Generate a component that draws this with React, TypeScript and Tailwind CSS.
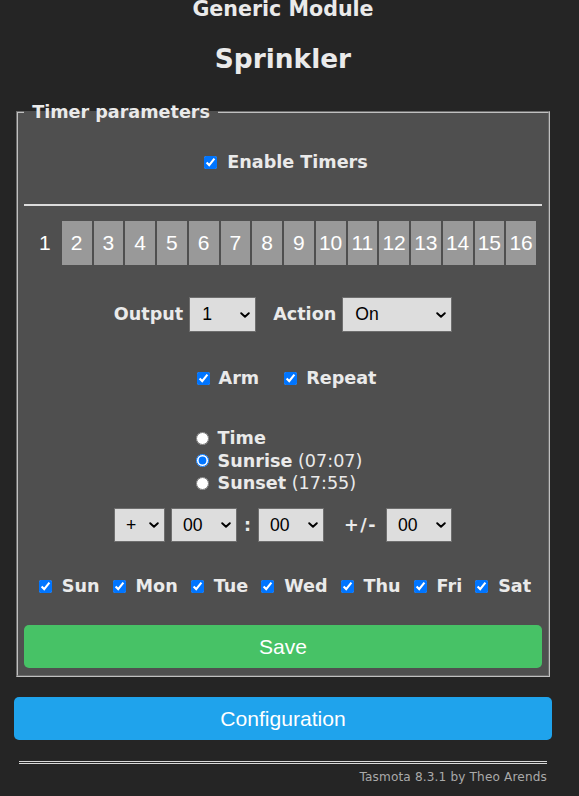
import React from "react";

function Chevron() {
  return (
    <svg
      width="10"
      height="6"
      viewBox="0 0 10 6"
      className="pointer-events-none absolute right-[6px] top-1/2 -translate-y-1/2"
    >
      <path
        d="M1.2 1.2L5 4.8L8.8 1.2"
        fill="none"
        stroke="#000"
        strokeWidth="1.9"
        strokeLinecap="round"
        strokeLinejoin="round"
      />
    </svg>
  );
}

function Sel({ box, pad, options, value }: { box: string; pad: string; options: string[]; value: string }) {
  return (
    <div className={"relative shrink-0 " + box}>
      <select
        defaultValue={value}
        className={
          "appearance-none w-full h-full bg-[#dddddd] border border-[#6e6e6e] text-black text-[17.6px] font-['Liberation_Sans',Arial,sans-serif] outline-none " +
          pad
        }
      >
        {options.map((o) => (
          <option key={o} value={o}>
            {o}
          </option>
        ))}
      </select>
      <Chevron />
    </div>
  );
}

function Cb() {
  return <input type="checkbox" defaultChecked className="w-[13px] h-[13px] m-0 shrink-0" />;
}

export default function App() {
  const tabs = Array.from({ length: 16 }, (_, i) => i + 1);
  const days = ["Sun", "Mon", "Tue", "Wed", "Thu", "Fri", "Sat"];
  const mins = Array.from({ length: 60 }, (_, i) => String(i).padStart(2, "0"));
  const hours = Array.from({ length: 24 }, (_, i) => String(i).padStart(2, "0"));
  return (
    <div className="min-h-screen overflow-hidden bg-[#252525] text-[#eaeaea] font-['DejaVu_Sans',Verdana,sans-serif] text-[17.6px]">
      <div className="ml-[14px] w-[538px] flex flex-col">
        <h3 className="mt-[-3px] text-center font-bold text-[20.6px] leading-[24px]">Generic Module</h3>
        <h2 className="mt-[22px] text-center font-bold text-[26.4px] leading-[31px]">Sprinkler</h2>

        <fieldset className="mt-[28px] mx-[2px] px-[6px] pb-[7px] bg-[#4f4f4f] border-2 [border-style:groove] border-[#c0c0c0]">
          <legend className="font-bold leading-[20.5px] px-[2px]">&nbsp;Timer parameters&nbsp;</legend>

          <div className="mt-[30px] h-[20px] flex items-center justify-center pl-[6px]">
            <Cb />
            <span className="ml-[10px] font-bold">Enable Timers</span>
          </div>

          <div className="mt-[31.5px] h-[2px] bg-[#dcdcdc]" />

          <div className="mt-[15px] mx-[6px] flex gap-[2px] h-[44px]">
            {tabs.map((t) => (
              <button
                key={t}
                className={
                  "flex-1 flex items-center justify-center text-white text-[21px] font-['Liberation_Sans',Arial,sans-serif] " +
                  (t === 1 ? "bg-transparent" : "bg-[#999999]")
                }
              >
                {t}
              </button>
            ))}
          </div>

          <div className="mt-[32px] h-[35px] flex items-center justify-center">
            <span className="font-bold">Output</span>
            <div className="w-[6px]" />
            <Sel box="w-[67px] h-[35px]" pad="pl-[12px]" options={["1", "2", "3", "4"]} value="1" />
            <div className="w-[17px]" />
            <span className="font-bold">Action</span>
            <div className="w-[6px]" />
            <Sel box="w-[110px] h-[35px]" pad="pl-[12px]" options={["Off", "On", "Toggle", "Rule"]} value="On" />
          </div>

          <div className="mt-[36px] h-[20px] flex items-center justify-center pl-[7px]">
            <Cb />
            <span className="ml-[9px] font-bold">Arm</span>
            <div className="w-[25px]" />
            <Cb />
            <span className="ml-[9px] font-bold">Repeat</span>
          </div>

          <div className="mt-[39px] flex justify-center pr-[8px]">
            <div className="flex flex-col">
              <label className="h-[22.5px] flex items-center">
                <input type="radio" name="mode" className="w-[13px] h-[13px] m-0" />
                <span className="ml-[9px] font-bold">Time</span>
              </label>
              <label className="h-[22.5px] flex items-center">
                <input type="radio" name="mode" defaultChecked className="w-[13px] h-[13px] m-0" />
                <span className="ml-[9px]">
                  <b className="font-bold">Sunrise</b> (07:07)
                </span>
              </label>
              <label className="h-[22.5px] flex items-center">
                <input type="radio" name="mode" className="w-[13px] h-[13px] m-0" />
                <span className="ml-[9px]">
                  <b className="font-bold">Sunset</b> (17:55)
                </span>
              </label>
            </div>
          </div>

          <div className="mt-[13.5px] h-[34px] flex items-center justify-center">
            <Sel box="w-[51px] h-[34px]" pad="pl-[11px]" options={["+", "-"]} value="+" />
            <div className="w-[6px]" />
            <Sel box="w-[66px] h-[34px]" pad="pl-[11px]" options={hours} value="00" />
            <span className="mx-[7px] font-bold">:</span>
            <Sel box="w-[66px] h-[34px]" pad="pl-[11px]" options={mins} value="00" />
            <span className="ml-[20px] mr-[9px] font-bold tracking-[1.5px]">+/-</span>
            <Sel box="w-[66px] h-[34px]" pad="pl-[11px]" options={mins} value="00" />
          </div>

          <div className="mt-[34px] h-[20px] flex items-center justify-center pl-[4px]">
            {days.map((d, i) => (
              <div key={d} className={"flex items-center " + (i > 0 ? "ml-[13px]" : "")}>
                <Cb />
                <span className="ml-[10px] font-bold">{d}</span>
              </div>
            ))}
          </div>

          <button className="mt-[29px] w-full h-[43px] rounded-[5px] bg-[#47c266] text-white text-[21.1px] font-['Liberation_Sans',Arial,sans-serif]">
            Save
          </button>
        </fieldset>

        <button className="mt-[20px] w-full h-[43px] rounded-[5px] bg-[#1fa3ec] text-white text-[21.1px] font-['Liberation_Sans',Arial,sans-serif]">
          Configuration
        </button>

        <div className="mt-[21px] mx-[5px] h-[3px] border-y border-[#d8d8d8]" />
        <div className="mt-[6px] mr-[5px] text-right text-[12.1px] leading-[14px] tracking-[0.15px] text-[#aaaaaa]">
          Tasmota 8.3.1 by Theo Arends
        </div>
      </div>
    </div>
  );
}
